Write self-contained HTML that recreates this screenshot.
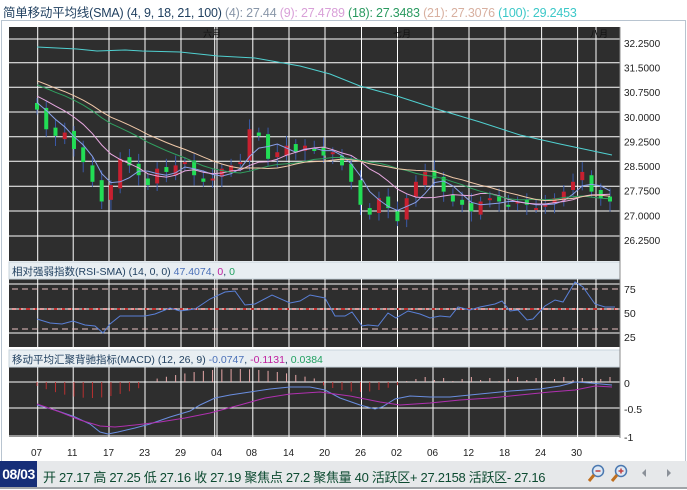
<!DOCTYPE html>
<html><head><meta charset="utf-8"><style>
body{margin:0;width:687px;height:490px;overflow:hidden;background:#fff;font-family:"Liberation Sans","Noto Sans CJK SC",sans-serif;position:relative}
.t{position:absolute;white-space:nowrap}
</style></head><body>
<div class="t" style="left:3px;top:2px;font-size:12.5px;color:#1e3e5e;letter-spacing:-0.2px">简单移动平均线(SMA) (4, 9, 18, 21, 100) <span style="color:#8896a8">(4): 27.44</span> <span style="color:#d9a0d8">(9): 27.4789</span> <span style="color:#2a9a60">(18): 27.3483</span> <span style="color:#d8b0a0">(21): 27.3076</span> <span style="color:#3cc8c8">(100): 29.2453</span></div>
<div style="position:absolute;left:1px;top:20px;width:683px;height:440px;border:1px solid #b8c4d0;border-bottom:none"></div>
<svg id="s" width="687" height="490" style="position:absolute;left:0;top:0" font-family="Liberation Sans" font-size="10.5"></svg>
<div style="position:absolute;left:0;top:461px;width:687px;height:26px;background:#e6e8ea;border-bottom:2px solid #a0a4a8"></div>
<div class="t" style="left:0;top:461px;width:37px;height:26px;background:#162e78;color:#fff;font-size:14px;line-height:26px;text-align:center;font-weight:bold;letter-spacing:-0.5px">08/03</div>
<div class="t" style="left:43px;top:467px;font-size:13px;color:#0c4a30;letter-spacing:-0.3px">开 27.17 高 27.25 低 27.16 收 27.19 聚焦点 27.2 聚焦量 40 活跃区+ 27.2158 活跃区- 27.16</div>
<svg width="100" height="24" style="position:absolute;left:585px;top:463px">
<circle cx="13" cy="8" r="5.5" fill="#dde8f4" stroke="#4a78b0" stroke-width="1.5"/><line x1="9" y1="12" x2="4" y2="18" stroke="#c07020" stroke-width="3"/><line x1="10.5" y1="8" x2="15.5" y2="8" stroke="#c04040" stroke-width="1.5"/>
<circle cx="36" cy="8" r="5.5" fill="#dde8f4" stroke="#4a78b0" stroke-width="1.5"/><line x1="32" y1="12" x2="27" y2="18" stroke="#c07020" stroke-width="3"/><line x1="33.5" y1="8" x2="38.5" y2="8" stroke="#c04040" stroke-width="1.5"/><line x1="36" y1="5.5" x2="36" y2="10.5" stroke="#c04040" stroke-width="1.5"/>
<path d="M61 6 L57 10 L61 14Z" fill="#8a9098"/><path d="M82 6 L86 10 L82 14Z" fill="#8a9098"/>
</svg>
<script>
var s=document.getElementById('s'),h='';
function R(x,y,w,hh,c,e){h+='<rect x="'+x+'" y="'+y+'" width="'+w+'" height="'+hh+'" fill="'+c+'" '+(e||'')+'/>';}
function L(x1,y1,x2,y2,c,e){h+='<line x1="'+x1+'" y1="'+y1+'" x2="'+x2+'" y2="'+y2+'" stroke="'+c+'" '+(e||'')+'/>';}
function T(x,y,t,c,e){h+='<text x="'+x+'" y="'+y+'" fill="'+(c||'#222')+'" '+(e||'')+'>'+t+'</text>';}
function P(pts,c,e){h+='<polyline points="'+pts+'" fill="none" stroke="'+c+'" '+(e||'')+'/>';}
R(9,27,611,234,'#2e2e2e');R(9,279,611,68,'#2e2e2e');R(9,367,611,71,'#2e2e2e');
R(9,262,611,17,'#e8eef2','stroke="#c8d4dc"');R(9,350,611,17,'#e8eef2','stroke="#c8d4dc"');
var vx=[37.7,73.2,109,145,181,214.7,217,252.8,289,325,361.5,397.5,433,469,505,541.6,577.6,596];
vx.forEach(function(x){L(x,27,x,261,'#fff');L(x,279,x,347,'#fff');L(x,367,x,438,'#fff');});
[39,62.7,87.3,112,136.7,161.3,186.3,211,236].forEach(function(y){L(9,y,620,y,'#fff');});
[284,309,333].forEach(function(y){L(9,y,620,y,'#fff');});
[382,408,436].forEach(function(y){L(9,y,620,y,'#fff');});
L(9,438,620,438,'#fff','stroke-width="2"');
L(620,27,620,438,'#888');
T(203,37,'六月','#111','font-size="9"');T(393,37,'七月','#111','font-size="9"');T(590,37,'八月','#111','font-size="9"');
var pl=['32.2500','31.5000','30.7500','30.0000','29.2500','28.5000','27.7500','27.0000','26.2500'];
pl.forEach(function(t,i){T(624,47+i*24.62,t,'#222','font-size="10"');});
T(624,293,'75');T(624,317,'50');T(624,341,'25');
T(624,387,'0');T(624,413,'-0.5');T(624,441,'-1');
var xl=['07','11','17','23','29','04','08','14','20','26','02','06','12','18','24','30'];
var xp=[37,73,109,145,181,217,252,289,325,361,397,433,469,505,541,577];
xl.forEach(function(t,i){T(xp[i]-6,456,t,'#222','font-size="10"');});
T(12,275,'相对强弱指数(RSI-SMA) (14, 0, 0) <tspan fill="#4a70b8">47.4074</tspan>, <tspan fill="#c020a0">0</tspan>, <tspan fill="#20a060">0</tspan>','#1e3e5e','font-size="10.5"');
T(12,363,'移动平均汇聚背驰指标(MACD) (12, 26, 9) <tspan fill="#4a70b8">-0.0747</tspan>, <tspan fill="#c020a0">-0.1131</tspan>, <tspan fill="#20a060">0.0384</tspan>','#1e3e5e','font-size="10.5"');
L(12,289,618,289,'#e8c0c0','stroke-dasharray="6,4"');L(12,309,618,309,'#c03030','stroke-dasharray="4,3" stroke-width="2"');L(12,309,618,309,'#fff','stroke-dasharray="5,4"');L(12,329,618,329,'#e8c0c0','stroke-dasharray="6,4"');
var C=[30.1,29.5,29.3,29.4,28.9,28.5,27.9,27.3,27.8,28.6,28.4,28.1,27.8,28.3,28.2,28.4,28.5,28.1,27.9,28.0,28.3,28.4,28.5,29.5,29.3,28.6,28.8,29.0,28.8,29.0,28.9,28.7,28.8,28.4,27.9,27.2,26.9,27.4,27.1,26.7,27.4,27.9,28.2,28.0,27.6,27.3,27.2,27.0,27.3,27.4,27.3,27.2,27.3,27.2,27.1,27.2,27.4,27.6,27.9,28.2,27.6,27.4,27.3];
var n=C.length,dx=(610-37)/(n-1);
function Y(p){return 39+(32.25-p)/0.75*24.62;}
var hist=[31.9,31.8,31.7,31.6,31.5,31.4,31.35,31.3,31.2,31.1,31.05,31.0,30.9,30.8,30.75,30.7,30.6,30.5,30.45,30.4,30.3];
var A=hist.concat(C),o=hist.length;
for(var i=0;i<n;i++){var x=37+i*dx,c=C[i],op=i?C[i-1]+(i%3?0.05:-0.1):30.3;var up=c>op;
var hi=Math.max(c,op)+0.15+(i%4)*0.05,lo=Math.min(c,op)-0.15-(i%3)*0.08;
L(x,Y(hi),x,Y(lo),'#3a5aa8');var t=Y(Math.max(c,op)),b=Y(Math.min(c,op));if(b-t<2)b=t+2;
R(x-2,t,4,b-t,up?'#c82030':'#22dd55');}
function sma(k,col){var p=[];for(var i=0;i<n;i++){var s=0;for(var j=0;j<k;j++)s+=A[o+i-j];p.push((37+i*dx).toFixed(1)+','+Y(s/k).toFixed(1));}P(p.join(' '),col);}
sma(4,'#8aa0e8');sma(9,'#e8a8e0');sma(18,'#30a060');sma(21,'#f0c8a8');
P('37,47 77,49 97,51 125,50 142,51 180,52 218,56 255,58 300,66 330,74 360,86 400,97 440,110 480,122 520,135 560,144 612,155','#50d0d0');
var rs=[[37,319],[50,323],[62,324],[73,321],[85,325],[95,326],[103,333],[110,324],[120,316],[145,316],[155,314],[170,308],[180,311],[195,309],[210,299],[225,292],[235,291],[245,305],[255,304],[272,295],[290,303],[300,301],[310,295],[325,298],[335,316],[345,316],[352,312],[362,326],[368,325],[378,326],[388,313],[396,318],[408,311],[420,314],[430,318],[440,316],[450,317],[458,307],[470,310],[480,307],[495,304],[502,301],[510,311],[518,310],[527,320],[533,319],[545,306],[555,300],[563,302],[575,282],[583,287],[595,304],[605,307],[615,307]];
P(rs.map(function(p){return p.join(',')}).join(' '),'#5a80d8');
// MACD histogram
for(var i=0;i<n;i++){var x=37+i*dx,v;
if(x<145)v=4+Math.sin((x-37)/108*Math.PI)*12;
else if(x<150)v=0;
else if(x<322)v=-2-Math.sin((x-150)/172*Math.PI)*11;
else if(x<398)v=3+Math.sin((x-322)/76*Math.PI)*7;
else v=-1-((i*7)%5);
L(x,382,x,382+v,v>0?'#b83030':'#e8a8a8');}
P('37,405 55,410 75,417 90,424 100,432 108,434 118,432 135,428 150,424 170,417 190,411 200,405 215,398 230,395 250,392 270,389 290,387 310,387 325,390 340,398 360,405 375,409 382,407 395,399 410,396 430,397 450,397 480,394 510,391 540,389 560,386 575,382 590,383 612,385','#6a8ee0');
P('37,404 60,412 80,420 100,426 115,427 135,425 160,422 185,418 210,413 240,405 265,398 290,394 320,392 350,396 380,402 400,405 430,403 460,400 490,398 520,395 550,392 575,390 595,386 612,387','#b030b0');
s.innerHTML=h;
</script>
</body></html>
